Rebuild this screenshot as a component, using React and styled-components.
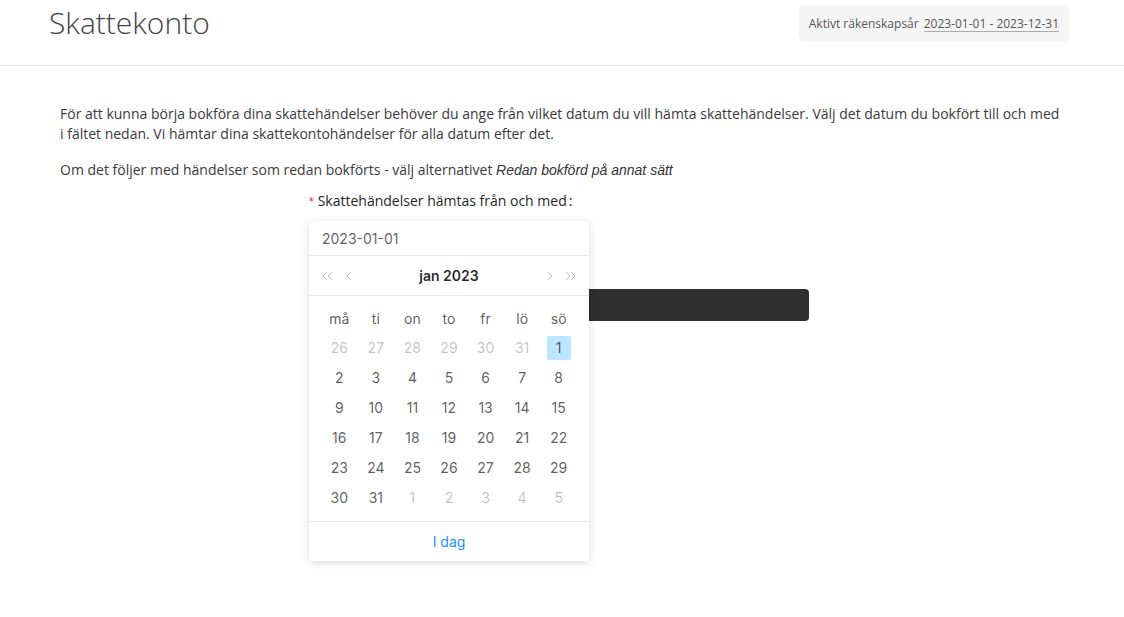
import React from "react";
import styled, { createGlobalStyle } from "styled-components";

const GlobalStyle = createGlobalStyle`
  html, body, #root {
    margin: 0;
    padding: 0;
    min-height: 100%;
    height: 100%;
    background: #fff;
  }
  body {
    font-family: "Open Sans", "Liberation Sans", sans-serif;
    color: #3a3a3a;
  }
`;

const Page = styled.div`
  min-height: 617px;
`;

const Header = styled.header`
  display: flex;
  justify-content: space-between;
  align-items: flex-start;
  height: 65px;
  padding: 0 55px 0 49px;
  border-bottom: 1px solid #e6e6e6;
`;

const Title = styled.h1`
  margin: 0;
  font-size: 30px;
  line-height: 46px;
  font-weight: 300;
  color: #444;
`;

const YearBadge = styled.div`
  margin-top: 5px;
  height: 37px;
  display: flex;
  align-items: center;
  gap: 5px;
  padding: 0 10px;
  background: #f5f5f5;
  border-radius: 6px;
  font-size: 12px;
  color: #555;
`;

const YearRange = styled.span`
  color: #555;
  border-bottom: 1px solid #aaa;
  line-height: 15px;
`;

const Main = styled.main`
  padding: 38px 60px 0;
`;

const Text = styled.p`
  margin: 0 0 ${(p) => (p.$tight ? 11 : 16)}px;
  font-size: 14px;
  line-height: 20px;
  color: #3a3a3a;
`;

const Em = styled.em`
  font-family: "Liberation Sans", Arial, sans-serif;
  color: #333;
`;

const Form = styled.div`
  width: 500px;
  margin: 0 0 0 calc(50% - 253px);
`;

const Label = styled.label`
  display: block;
  font-size: 14px;
  line-height: 20px;
  color: #262626;
  margin-bottom: 9px;
`;

const Required = styled.span`
  color: #f5222d;
  font-size: 12px;
  margin-right: 4px;
  font-family: "Liberation Sans", sans-serif;
`;

const Colon = styled.span`
  margin-left: 2px;
`;

const Field = styled.div`
  position: relative;
  height: 32px;
`;

const DarkButton = styled.div`
  margin-top: 36px;
  height: 32px;
  border-radius: 4px;
  background: #2f2f2f;
`;

const Popup = styled.div`
  position: absolute;
  top: 0;
  left: 0;
  width: 280px;
  background: #fff;
  border-radius: 4px;
  box-shadow: 0 2px 8px rgba(0, 0, 0, 0.15);
  font-family: Inter, "Liberation Sans", Arial, sans-serif;
  font-size: 14px;
  color: rgba(0, 0, 0, 0.65);
  z-index: 5;
`;

const InputRow = styled.div`
  height: 34px;
  display: flex;
  align-items: center;
  padding: 0 13px;
  border-bottom: 1px solid #e8e8e8;
  color: rgba(0, 0, 0, 0.65);
`;

const PanelHeader = styled.div`
  height: 39px;
  display: flex;
  align-items: center;
  padding: 0 8px;
  border-bottom: 1px solid #e8e8e8;
`;

const NavButton = styled.span`
  width: 21px;
  height: 39px;
  display: flex;
  align-items: center;
  justify-content: center;
  color: #bfbfbf;
`;

const MonthTitle = styled.div`
  flex: 1;
  text-align: center;
  font-weight: 600;
  color: rgba(0, 0, 0, 0.85);
`;

const Body = styled.div`
  padding: 7px 12px 8px;
`;

const Grid = styled.div`
  display: grid;
  grid-template-columns: repeat(7, 1fr);
  grid-auto-rows: 30px;
`;

const WeekDay = styled.div`
  display: flex;
  align-items: center;
  justify-content: center;
  color: rgba(0, 0, 0, 0.65);
`;

const DayCell = styled.div`
  display: flex;
  align-items: center;
  justify-content: center;
`;

const Day = styled.span`
  width: 24px;
  height: 24px;
  line-height: 24px;
  text-align: center;
  border-radius: 2px;
  background: ${(p) => (p.$selected ? "#bae7ff" : "transparent")};
  color: ${(p) => (p.$muted ? "rgba(0,0,0,0.25)" : "rgba(0,0,0,0.65)")};
`;

const Footer = styled.div`
  height: 39px;
  border-top: 1px solid #e8e8e8;
  display: flex;
  align-items: center;
  justify-content: center;
  color: #1890ff;
`;

function Chevron({ dir = "left", double }) {
  const pts = dir === "left" ? "5,1 1,5 5,9" : "1,1 5,5 1,9";
  return (
    <svg width={double ? 11 : 6} height="10" viewBox={double ? "0 0 11 10" : "0 0 6 10"} fill="none" stroke="currentColor" strokeWidth="1">
      <polyline points={pts} />
      {double && <polyline points={pts} transform="translate(5 0)" />}
    </svg>
  );
}

const weekDays = ["må", "ti", "on", "to", "fr", "lö", "sö"];

const days = [
  ...[26, 27, 28, 29, 30, 31].map((d) => ({ d, muted: true })),
  { d: 1, selected: true },
  ...Array.from({ length: 30 }, (_, i) => ({ d: i + 2 })),
  ...[1, 2, 3, 4, 5].map((d) => ({ d, muted: true })),
];

export default function App() {
  return (
    <Page>
      <GlobalStyle />
      <Header>
        <Title>Skattekonto</Title>
        <YearBadge>
          Aktivt räkenskapsår <YearRange>2023-01-01 - 2023-12-31</YearRange>
        </YearBadge>
      </Header>
      <Main>
        <Text>
          För att kunna börja bokföra dina skattehändelser behöver du ange från vilket datum du vill hämta skattehändelser. Välj det datum du bokfört till och med i fältet nedan. Vi hämtar dina skattekontohändelser för alla datum efter det.
        </Text>
        <Text $tight>
          Om det följer med händelser som redan bokförts - välj alternativet <Em>Redan bokförd på annat sätt</Em>
        </Text>
        <Form>
          <Label>
            <Required>*</Required>Skattehändelser hämtas från och med<Colon>:</Colon>
          </Label>
          <Field>
            <Popup>
              <InputRow>2023-01-01</InputRow>
              <PanelHeader>
                <NavButton><Chevron dir="left" double /></NavButton>
                <NavButton><Chevron dir="left" /></NavButton>
                <MonthTitle>jan 2023</MonthTitle>
                <NavButton><Chevron dir="right" /></NavButton>
                <NavButton><Chevron dir="right" double /></NavButton>
              </PanelHeader>
              <Body>
                <Grid>
                  {weekDays.map((w) => (
                    <WeekDay key={w}>{w}</WeekDay>
                  ))}
                  {days.map((x, i) => (
                    <DayCell key={i}>
                      <Day $muted={x.muted} $selected={x.selected}>{x.d}</Day>
                    </DayCell>
                  ))}
                </Grid>
              </Body>
              <Footer>I dag</Footer>
            </Popup>
          </Field>
          <DarkButton />
        </Form>
      </Main>
    </Page>
  );
}
